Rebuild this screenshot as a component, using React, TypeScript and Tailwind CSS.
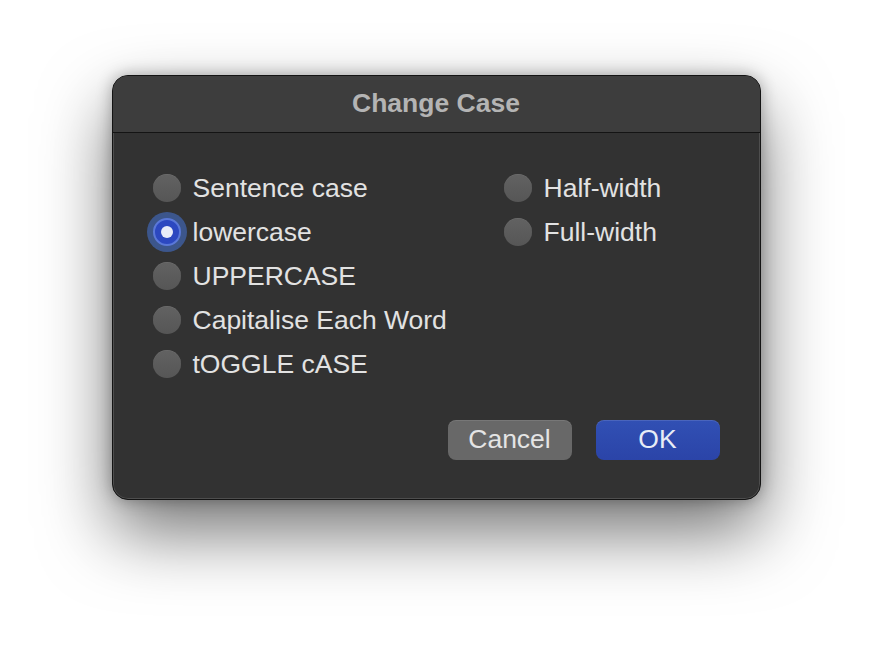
import React from "react";

const font = { fontFamily: '"Liberation Sans", Arial, sans-serif' };

function Radio({ label, checked = false }: { label: string; checked?: boolean }) {
  return (
    <div className="flex h-[44px] items-center gap-[12px]">
      {checked ? (
        <div className="relative h-[28px] w-[28px]">
          <div className="absolute -inset-[6px] rounded-full bg-[#3e5d9c]/85" />
          <div className="absolute inset-0 flex items-center justify-center rounded-full border-2 border-[#5a78d8] bg-[#2c48c0]">
            <div className="h-[12px] w-[12px] rounded-full bg-[#e8ecf8]" />
          </div>
        </div>
      ) : (
        <div className="h-[28px] w-[28px] rounded-full bg-gradient-to-b from-[#626262] to-[#565656] shadow-[inset_0_0.5px_0_rgba(255,255,255,0.12)]" />
      )}
      <span className="text-[26.5px] leading-none text-[#e2e2e2]">{label}</span>
    </div>
  );
}

export default function App() {
  return (
    <div className="flex min-h-[648px] w-full justify-center bg-white pt-[75px]" style={font}>
      <div className="flex h-[425px] w-[649px] flex-col overflow-hidden rounded-[16px] border border-[#141414] bg-[#323232] shadow-[0_32px_70px_rgba(0,0,0,0.55),0_0_16px_rgba(0,0,0,0.3),inset_0_0_0_1px_rgba(255,255,255,0.14)]">
        <div className="flex h-[57px] shrink-0 items-center justify-center border-b border-[#141414] bg-[#3d3d3d]">
          <span className="text-[26.5px] font-bold text-[#b4b4b4]">Change Case</span>
        </div>
        <div className="flex flex-1 flex-col px-[40px] pt-[33px] pb-[39px]">
          <div className="flex">
            <div className="flex w-[351px] flex-col">
              <Radio label="Sentence case" />
              <Radio label="lowercase" checked />
              <Radio label="UPPERCASE" />
              <Radio label="Capitalise Each Word" />
              <Radio label="tOGGLE cASE" />
            </div>
            <div className="flex flex-col">
              <Radio label="Half-width" />
              <Radio label="Full-width" />
            </div>
          </div>
          <div className="mt-auto flex justify-end gap-[24px]">
            <button className="h-[40px] w-[124px] rounded-[8px] bg-[#686868] text-[26.5px] text-[#e4e4e4] shadow-[inset_0_1px_0_rgba(255,255,255,0.1)]">
              Cancel
            </button>
            <button className="h-[40px] w-[124px] rounded-[8px] bg-gradient-to-b from-[#3150b4] to-[#2b44a8] text-[26.5px] text-[#e8ecf6] shadow-[inset_0_1px_0_rgba(255,255,255,0.12)]">
              OK
            </button>
          </div>
        </div>
      </div>
    </div>
  );
}
